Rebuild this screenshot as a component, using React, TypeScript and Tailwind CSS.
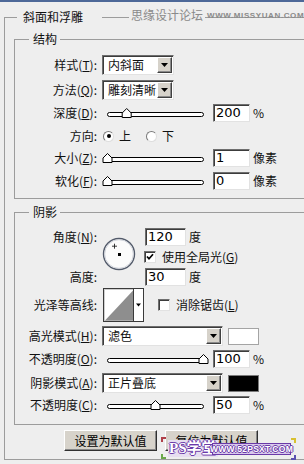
import React from "react";

const sunken =
  "border border-t-[#6e6e6e] border-l-[#6e6e6e] border-r-[#e2e2e2] border-b-[#e2e2e2] shadow-[inset_1px_1px_0_#3c3c3c]";

function Label({ children }: { children: React.ReactNode }) {
  return <div className="w-[82px] shrink-0 text-right leading-[14px] whitespace-nowrap">{children}</div>;
}

function U({ c }: { c: string }) {
  return <span className="underline underline-offset-[1px]">{c}</span>;
}

function Input({ v, wide }: { v: string; wide?: boolean }) {
  return (
    <div
      className={`${wide ? "w-[41px]" : "w-[37px]"} h-[18px] bg-white ${sunken} pl-[2px] font-['DejaVu_Sans',sans-serif] text-[13px] leading-[16px] text-black`}
    >
      {v}
    </div>
  );
}

function Select({ text, wide }: { text: string; wide?: boolean }) {
  return (
    <div
      className={`${wide ? "w-[121px]" : "w-[72px]"} h-[20px] bg-white ${sunken} flex items-center justify-between pl-[5px] pr-[1px]`}
    >
      <span className="text-[12px] leading-[14px] whitespace-nowrap">{text}</span>
      <div className="w-[15px] h-[16px] bg-[#d6d2ca] border border-t-white border-l-white border-r-[#404040] border-b-[#404040] shadow-[inset_-1px_-1px_0_#8a8a8a] flex items-center justify-center shrink-0">
        <svg width="7" height="4" viewBox="0 0 7 4">
          <path d="M0 0H7L3.5 4Z" fill="#000" />
        </svg>
      </div>
    </div>
  );
}

function Slider({ frac }: { frac: number }) {
  const cx = 7.5 + frac * 96;
  return (
    <svg width="110" height="18" viewBox="0 0 110 18" className="ml-[3px] shrink-0">
      <rect x="7.5" y="8.5" width="96" height="4" rx="2" fill="#fff" stroke="#000" strokeWidth="1" />
      <path
        d={`M${cx} 4.5 L${cx + 4.5} 9 L${cx + 4.5} 13.5 L${cx - 4.5} 13.5 L${cx - 4.5} 9 Z`}
        fill="#fff"
        stroke="#000"
        strokeWidth="1"
      />
    </svg>
  );
}

function Checkbox({ on }: { on?: boolean }) {
  return (
    <div className={`w-[12px] h-[12px] bg-white ${sunken} flex items-center justify-center shrink-0`}>
      {on && (
        <svg width="8" height="8" viewBox="0 0 8 8">
          <path d="M1 3.5L3 5.8L7 1.2" stroke="#000" strokeWidth="1.7" fill="none" />
        </svg>
      )}
    </div>
  );
}

function Radio({ on }: { on?: boolean }) {
  return (
    <div className="w-[11px] h-[11px] rounded-full bg-white border border-t-[#7a7a7a] border-l-[#7a7a7a] border-r-[#dedede] border-b-[#dedede] flex items-center justify-center shrink-0">
      {on && <div className="w-[4px] h-[4px] bg-black rounded-full" />}
    </div>
  );
}

function Unit({ children }: { children: React.ReactNode }) {
  return <span className="ml-[3px] leading-[14px] whitespace-nowrap">{children}</span>;
}

export default function App() {
  return (
    <div className="relative w-[304px] h-[464px] overflow-hidden bg-[#eeeeee] text-[12px] text-[#111] font-['Noto_Sans_CJK_SC','Noto_Sans',sans-serif]">
      <div className="h-[2px] bg-[#4d6898]" />
      <fieldset className="ml-[4px] mt-[8px] w-[320px] border border-[#9c9c9c] pb-[8px]">
        <legend className="ml-[12px] pl-[6px] pr-[19px] leading-[14px]">斜面和浮雕</legend>

        <fieldset className="ml-[9px] mt-[8px] w-[300px] border border-[#9c9c9c] pb-[8px]">
          <legend className="ml-[14px] pl-[4px] pr-[3px] leading-[14px]">结构</legend>
          <div className="flex items-center h-[20px] mt-[9px]">
            <Label>
              样式(<U c="T" />):
            </Label>
            <div className="ml-[5px]">
              <Select text="内斜面" />
            </div>
          </div>
          <div className="flex items-center h-[20px] mt-[5px]">
            <Label>
              方法(<U c="Q" />):
            </Label>
            <div className="ml-[5px]">
              <Select text="雕刻清晰" />
            </div>
          </div>
          <div className="flex items-center h-[18px] mt-[4px]">
            <Label>
              深度(<U c="D" />):
            </Label>
            <Slider frac={0.2} />
            <div className="ml-[3px]">
              <Input v="200" />
            </div>
            <Unit>%</Unit>
          </div>
          <div className="flex items-center h-[18px] mt-[5px]">
            <Label>方向:</Label>
            <div className="ml-[6px]">
              <Radio on />
            </div>
            <span className="ml-[5px] leading-[14px]">上</span>
            <div className="ml-[15px]">
              <Radio />
            </div>
            <span className="ml-[5px] leading-[14px]">下</span>
          </div>
          <div className="flex items-center h-[18px] mt-[4px]">
            <Label>
              大小(<U c="Z" />):
            </Label>
            <Slider frac={0} />
            <div className="ml-[3px]">
              <Input v="1" />
            </div>
            <Unit>像素</Unit>
          </div>
          <div className="flex items-center h-[18px] mt-[5px]">
            <Label>
              软化(<U c="F" />):
            </Label>
            <Slider frac={0} />
            <div className="ml-[3px]">
              <Input v="0" />
            </div>
            <Unit>像素</Unit>
          </div>
        </fieldset>

        <fieldset className="ml-[9px] mt-[6px] w-[300px] border border-[#9c9c9c] pb-[10px]">
          <legend className="ml-[14px] pl-[4px] pr-[3px] leading-[14px]">阴影</legend>
          <div className="flex mt-[9px]">
            <div className="w-[82px] shrink-0 h-[58px] flex flex-col justify-between">
              <div className="h-[18px] flex items-center justify-end leading-[14px] whitespace-nowrap">
                角度(<U c="N" />):
              </div>
              <div className="h-[18px] flex items-center justify-end leading-[14px]">高度:</div>
            </div>
            <svg width="34" height="34" viewBox="0 0 34 34" className="ml-[5px] mt-[9px] shrink-0">
              <circle cx="17" cy="17" r="15.5" fill="#fbfbfb" stroke="#525a6a" strokeWidth="1.4" />
              <circle cx="17" cy="17" r="14.3" fill="none" stroke="#c8ccd4" strokeWidth="0.8" />
              <path d="M12.5 6.7V11.7M10 9.2H15" stroke="#222" strokeWidth="0.9" />
              <rect x="16" y="16" width="3" height="3" fill="#000" />
            </svg>
            <div className="ml-[9px] flex flex-col gap-[2px]">
              <div className="flex items-center h-[18px]">
                <Input v="120" wide />
                <span className="ml-[3px] leading-[14px]">度</span>
              </div>
              <div className="flex items-center h-[18px] -ml-[1px]">
                <Checkbox on />
                <span className="ml-[6px] leading-[14px] whitespace-nowrap">
                  使用全局光(<U c="G" />)
                </span>
              </div>
              <div className="flex items-center h-[18px]">
                <Input v="30" wide />
                <span className="ml-[3px] leading-[14px]">度</span>
              </div>
            </div>
          </div>

          <div className="flex items-center h-[34px] mt-[2px]">
            <Label>光泽等高线:</Label>
            <svg width="41" height="34" viewBox="0 0 41 34" className="ml-[6px] shrink-0">
              <rect x="0.5" y="0.5" width="40" height="33" fill="#fff" stroke="#3a3a3a" />
              <rect x="1.5" y="1.5" width="29" height="31" fill="#fff" stroke="#cfcfcf" />
              <path d="M2 32.5 L30.5 2 L30.5 32.5 Z" fill="#8e8e8e" />
              <line x1="30.5" y1="1" x2="30.5" y2="33" stroke="#3a3a3a" />
              <path d="M33 15.5H38L35.5 18.5Z" fill="#000" />
            </svg>
            <div className="ml-[14px]">
              <Checkbox />
            </div>
            <span className="ml-[6px] leading-[14px] whitespace-nowrap">
              消除锯齿(<U c="L" />)
            </span>
          </div>

          <div className="flex items-center h-[20px] mt-[4px]">
            <Label>
              高光模式(<U c="H" />):
            </Label>
            <div className="ml-[5px]">
              <Select text="滤色" wide />
            </div>
            <div className="ml-[5px] w-[31px] h-[17px] bg-white border border-[#a4a4a4]" />
          </div>
          <div className="flex items-center h-[18px] mt-[4px]">
            <Label>
              不透明度(<U c="O" />):
            </Label>
            <Slider frac={1} />
            <div className="ml-[3px]">
              <Input v="100" />
            </div>
            <Unit>%</Unit>
          </div>
          <div className="flex items-center h-[20px] mt-[5px]">
            <Label>
              阴影模式(<U c="A" />):
            </Label>
            <div className="ml-[5px]">
              <Select text="正片叠底" wide />
            </div>
            <div className="ml-[5px] w-[31px] h-[17px] bg-black border border-[#7a7a7a]" />
          </div>
          <div className="flex items-center h-[18px] mt-[3px]">
            <Label>
              不透明度(<U c="C" />):
            </Label>
            <Slider frac={0.5} />
            <div className="ml-[3px]">
              <Input v="50" />
            </div>
            <Unit>%</Unit>
          </div>
        </fieldset>

        <div className="flex mt-[5px]">
          <button className="ml-[59px] w-[93px] h-[21px] bg-[#d7d3cb] border border-t-white border-l-white border-r-[#303030] border-b-[#303030] shadow-[inset_-1px_-1px_0_#888] text-[12px] leading-[14px] text-black whitespace-nowrap">
            设置为默认值
          </button>
          <button className="ml-[8px] w-[93px] h-[21px] bg-[#d7d3cb] border border-t-white border-l-white border-r-[#303030] border-b-[#303030] shadow-[inset_-1px_-1px_0_#888] text-[12px] leading-[14px] text-black whitespace-nowrap">
            复位为默认值
          </button>
        </div>
      </fieldset>

      {/* top watermark */}
      <div className="absolute left-[129px] top-[8px] flex items-end whitespace-nowrap">
        <span className="bg-[#eeeeee] px-[2px] text-[12px] leading-[14px] text-[#8a8a8a]">思缘设计论坛</span>
        <span className="ml-[2px] mb-[2px] font-['Liberation_Sans',sans-serif] font-bold text-[8px] leading-[8px] tracking-[0.6px] text-[#8a8a8a]">
          WWW.MISSYUAN.COM
        </span>
      </div>

      {/* bottom watermark */}
      <div className="absolute left-[158px] top-[435px] w-[142px] h-[26px] whitespace-nowrap">
        <div className="absolute left-[3px] top-[2px] w-[5px] h-[5px] border-t-2 border-l-2 border-[#b0404a]" />
        <div className="absolute left-[3px] bottom-[2px] w-[5px] h-[5px] border-b-2 border-l-2 border-[#6aa84a]" />
        <div className="absolute right-[4px] top-[3px] w-[5px] h-[5px] border-t-2 border-r-2 border-[#d8c030]" />
        <div className="absolute right-[4px] bottom-[1px] w-[5px] h-[5px] border-b-2 border-r-2 border-[#5a50b0]" />
        <div className="absolute left-[10px] top-[5px] h-[17px] px-[1px] bg-[#e6def0] font-['Liberation_Serif','Noto_Sans_CJK_SC',serif] font-bold text-[15px] leading-[17px] text-white [text-shadow:1px_0_#6a3aa8,-1px_0_#6a3aa8,0_1px_#6a3aa8,0_-1px_#6a3aa8]">
          PS学堂
        </div>
        <div className="absolute left-[54px] top-[8px] w-[79px] h-[12px] border border-[#6a3aa8] bg-[#d8c8ec] flex items-center justify-center font-['Liberation_Sans',sans-serif] font-bold text-[8.5px] leading-[10px] text-white tracking-[0.3px] [text-shadow:1px_0_#6a3aa8,-1px_0_#6a3aa8,0_1px_#6a3aa8,0_-1px_#6a3aa8]">
          WWW.52PSXT.COM
        </div>
      </div>
    </div>
  );
}
